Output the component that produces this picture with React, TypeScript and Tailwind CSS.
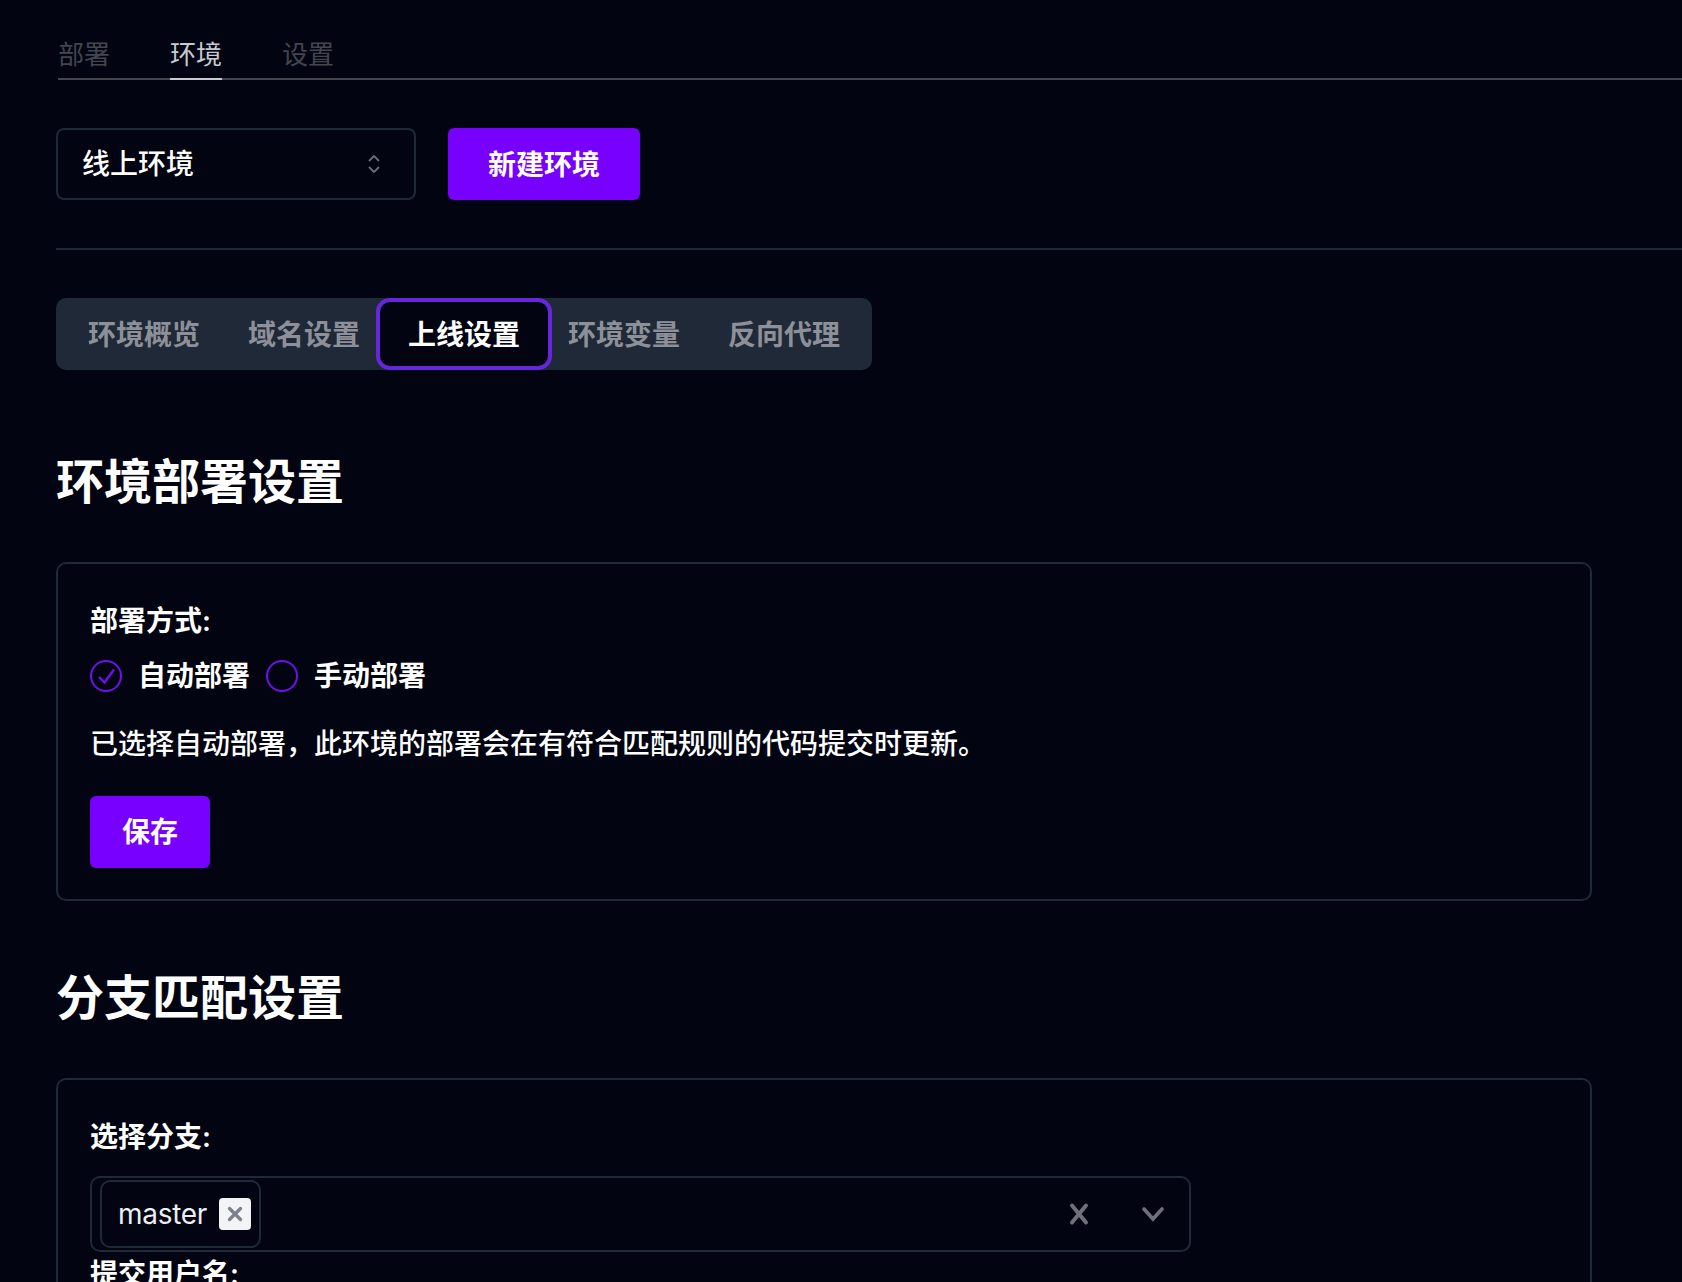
const topTabs = [
  { label: "部署", active: false },
  { label: "环境", active: true },
  { label: "设置", active: false },
];

const subTabs = ["环境概览", "域名设置", "上线设置", "环境变量", "反向代理"];

function Radio({ checked }: { checked?: boolean }) {
  return (
    <svg viewBox="0 0 32 32" className="h-8 w-8 shrink-0" fill="none" stroke="#7010ea" strokeWidth="2">
      <circle cx="16" cy="16" r="15" />
      {checked && <path d="M9 17l5.5 5.5L24 9.5" strokeWidth="2.4" />}
    </svg>
  );
}

export default function App() {
  return (
    <div
      className="h-[1282px] overflow-hidden bg-[#020412] pl-[56px] text-white"
      style={{ fontFamily: 'Inter, "Noto Sans CJK SC", sans-serif' }}
    >
      <div className="ml-[2px] flex gap-[60px] border-b-2 border-[#43444e] pt-[39px]">
        {topTabs.map((t) => (
          <div
            key={t.label}
            className={`-mb-[2px] border-b-2 pb-[7px] text-[26px] leading-8 ${
              t.active ? "border-[#c9cad0] text-[#c9cad0]" : "border-transparent text-[#43454f]"
            }`}
          >
            {t.label}
          </div>
        ))}
      </div>

      <div className="mt-12 flex gap-8">
        <div className="flex h-[72px] w-[360px] items-center justify-between rounded-lg border-2 border-[#1f2937] pl-[24px] pr-[33px] text-[28px] font-medium">
          <span>线上环境</span>
          <svg viewBox="0 0 14 20" className="h-5 w-[14px]" fill="none" stroke="#6b6d76" strokeWidth="1.8">
            <path d="M2 7l5-5 5 5M2 13l5 5 5-5" />
          </svg>
        </div>
        <button className="h-[72px] w-[192px] rounded-md bg-[#7700ff] pt-[2px] text-[28px] font-bold">新建环境</button>
      </div>

      <div className="mt-12 h-[2px] bg-[#1f2937]" />

      <div className="mt-12 flex h-[72px] w-[816px] items-center gap-12 rounded-[10px] bg-[#1f2937] px-8 text-[28px] font-bold text-[#8d9099]">
        {subTabs.map((t) =>
          t === "上线设置" ? (
            <div
              key={t}
              className="-mx-[32px] flex h-[72px] items-center rounded-[14px] border-4 border-[#6527d9] bg-[#020412] px-[28px] pt-[2px] text-white"
            >
              {t}
            </div>
          ) : (
            <div key={t} className="pt-[2px]">
              {t}
            </div>
          ),
        )}
      </div>

      <h1 className="mt-[80px] text-[48px] font-bold leading-[64px]">环境部署设置</h1>

      <div className="mt-12 w-[1536px] rounded-[10px] border-2 border-[#1f2937] px-8 pb-[31px] pt-[37px]">
        <div className="text-[28px] font-semibold leading-10">部署方式:</div>
        <div className="mt-[19px] flex h-8 items-center text-[28px] font-semibold">
          <Radio checked />
          <span className="ml-4 mr-4">自动部署</span>
          <Radio />
          <span className="ml-4">手动部署</span>
        </div>
        <p className="mt-8 text-[28px] font-medium leading-10">已选择自动部署，此环境的部署会在有符合匹配规则的代码提交时更新。</p>
        <button className="mt-8 h-[72px] w-[120px] rounded-md bg-[#7700ff] text-[28px] font-bold">保存</button>
      </div>

      <h2 className="mt-[65px] text-[48px] font-bold leading-[64px]">分支匹配设置</h2>

      <div className="mt-12 w-[1536px] rounded-[10px] border-2 border-[#1f2937] px-8 pt-[37px]">
        <div className="text-[28px] font-semibold leading-10">选择分支:</div>
        <div className="mt-[19px] flex h-[76px] w-[1101px] items-center rounded-[10px] border-2 border-[#1f2937] pl-2 pr-[24px]">
          <div className="flex h-[68px] w-[161px] items-center rounded-[10px] border-2 border-[#1f2937] pl-[16px] text-[28px] tracking-[-0.01em] text-[#eceef2]">
            <span>master</span>
            <span className="ml-3 flex h-8 w-8 items-center justify-center rounded bg-[#f3f4f6]">
              <svg viewBox="0 0 16 16" className="h-4 w-4" fill="none" stroke="#7d818c" strokeWidth="3.4" strokeLinecap="round">
                <path d="M2.5 2.5l11 11M13.5 2.5l-11 11" />
              </svg>
            </span>
          </div>
          <svg viewBox="0 0 24 24" className="ml-auto h-6 w-6" fill="none" stroke="#6f7079" strokeWidth="4" strokeLinecap="round">
            <path d="M5 3.5l14 17M19 3.5L5 20.5" />
          </svg>
          <svg viewBox="0 0 24 24" className="ml-[50px] h-6 w-6" fill="none" stroke="#6f7079" strokeWidth="3.6" strokeLinecap="round">
            <path d="M3 7l9 10 9-10" />
          </svg>
        </div>
        <div className="mt-[2px] text-[28px] font-semibold leading-10">提交用户名:</div>
      </div>
    </div>
  );
}
